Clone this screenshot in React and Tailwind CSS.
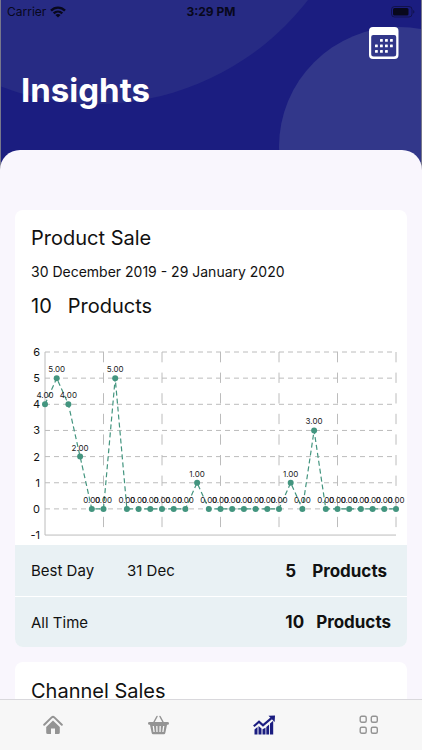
import { useState } from 'react';

const sales = [
  4, 5, 4, 2, 0, 0, 5, 0, 0, 0, 0, 0, 0, 1, 0, 0,
  0, 0, 0, 0, 0, 1, 0, 3, 0, 0, 0, 0, 0, 0, 0,
];

const CHART = { left: 30, right: 381, top: 20, step: 26.15, max: 6, min: -1 };

const xAt = (i) => CHART.left + (i * (CHART.right - CHART.left)) / (sales.length - 1);
const yAt = (value) => CHART.top + (CHART.max - value) * CHART.step;

const StatusBar = () => (
  <div className="grid grid-cols-3 items-center px-1.5 pt-1 h-5 text-xs text-[#08081c]">
    <div className="flex items-center gap-1">
      <span>Carrier</span>
      <svg className="w-4 h-3" viewBox="0 0 16 12" fill="none" stroke="currentColor" strokeWidth="2.4">
        <path d="M1 4.6C5 .6 11 .6 15 4.6" />
        <path d="M3.7 7.4c2.5-2.4 6.1-2.4 8.6 0" />
        <path d="M8 11.6 5.4 9c1.4-1.3 3.8-1.3 5.2 0z" fill="currentColor" stroke="none" />
      </svg>
    </div>
    <span className="text-center font-bold">3:29 PM</span>
    <svg className="w-6 h-3 justify-self-end" viewBox="0 0 24 12">
      <rect x=".5" y=".5" width="20.5" height="10.5" rx="3" fill="none" stroke="currentColor" opacity=".5" />
      <rect x="2" y="2" width="15.5" height="7.5" rx="1.5" fill="currentColor" />
      <path d="M22.3 4v3.6c1.4-.5 1.4-3.1 0-3.600z" fill="currentColor" opacity=".6" />
    </svg>
  </div>
);

const CalendarIcon = () => (
  <svg className="w-[30px] h-8" viewBox="0 0 30 32" fill="#fff">
    <path
      fillRule="evenodd"
      d="M4 0h21.500a4 4 0 0 1 4 4v24a4 4 0 0 1-4 4H4a4 4 0 0 1-4-4V4a4 4 0 0 1 4-4zM4.200 8a2 2 0 0 0-2 2v17a2.500 2.500 0 0 0 2.500 2.500h20a2.500 2.500 0 0 0 2.500-2.500V10a2 2 0 0 0-2-2z"
    />
    {[[11, 12], [16, 12], [21, 12], [6, 17.5], [11, 17.5], [16, 17.5], [21, 17.5], [6, 23], [11, 23], [16, 23]].map(([x, y]) => (
      <rect key={`${x}-${y}`} x={x} y={y} width="2.800" height="2.800" rx=".5" />
    ))}
  </svg>
);

const Header = () => (
  <header className="relative h-[180px] overflow-hidden border-x border-[#77778c] bg-[#1b1d80]">
    <svg className="absolute inset-0 w-full h-full" viewBox="0 0 420 180" preserveAspectRatio="xMaxYMin slice">
      <circle cx="95" cy="-164" r="268" fill="#272b84" />
      <circle cx="398" cy="147" r="120" fill="#32378a" />
    </svg>
    <div className="relative">
      <StatusBar />
      <div className="flex justify-between px-5 pt-[7px]">
        <h1 className="pt-[41px] text-[33px] leading-[44px] font-bold text-white">Insights</h1>
        <button type="button" aria-label="Choose dates" className="mr-0.5 self-start">
          <CalendarIcon />
        </button>
      </div>
    </div>
  </header>
);

const SalesChart = () => {
  const points = sales.map((value, i) => `${xAt(i)},${yAt(value)}`).join(' ');
  const levels = [6, 5, 4, 3, 2, 1, 0, -1];
  const columns = [5, 10, 15, 20, 25, 30];

  return (
    <svg className="block w-full" viewBox="0 0 392 213" role="img" aria-label="Products sold per day">
      <g stroke="#bcbcbc" strokeWidth="1">
        {levels.slice(0, -1).map((level) => (
          <line key={level} x1={CHART.left} x2={CHART.right} y1={yAt(level)} y2={yAt(level)} strokeDasharray="5 4" />
        ))}
        {columns.map((i) => (
          <line key={i} x1={xAt(i)} x2={xAt(i)} y1={yAt(6)} y2={yAt(-1)} strokeDasharray="10.3 10.3" />
        ))}
        <path d={`M${CHART.left} ${yAt(6)}V${yAt(-1)}H${CHART.right}`} fill="none" />
      </g>
      <g fontSize="11" textAnchor="end" fill="#111">
        {levels.map((level) => (
          <text key={level} x="25" y={yAt(level) + 4}>{level}</text>
        ))}
      </g>
      <polyline points={points} fill="none" stroke="#43957f" strokeWidth="1.2" strokeDasharray="5 3" />
      {sales.map((value, i) => (
        <g key={i}>
          <circle cx={xAt(i)} cy={yAt(value)} r="3" fill="#43957f" />
          <text x={xAt(i)} y={yAt(value) - 6} fontSize="8" textAnchor="middle" fill="#222">
            {value.toFixed(2)}
          </text>
        </g>
      ))}
    </svg>
  );
};

const ProductSaleCard = () => (
  <section className="overflow-hidden rounded-lg bg-white">
    <div className="px-4 pt-4">
      <h2 className="text-xl leading-6">Product Sale</h2>
      <p className="mt-3 text-sm">30 December 2019 - 29 January 2020</p>
      <p className="mt-3 flex gap-4 text-xl leading-6">
        <span>10</span>
        <span>Products</span>
      </p>
    </div>
    <div className="mt-3.5">
      <SalesChart />
    </div>
    <div className="flex h-[51px] items-center bg-[#e9f1f4] pl-4 pr-5 pt-0.5 text-[15px]">
      <span className="w-24">Best Day</span>
      <span>31 Dec</span>
      <span className="ml-auto flex gap-4 text-[17px] font-bold">
        <span>5</span>
        <span>Products</span>
      </span>
    </div>
    <div className="mt-px flex h-[50px] items-center bg-[#e9f1f4] px-4 pt-0.5 text-[15px]">
      <span>All Time</span>
      <span className="ml-auto flex gap-3 text-[17px] font-bold">
        <span>10</span>
        <span>Products</span>
      </span>
    </div>
  </section>
);

const HomeIcon = () => (
  <svg className="w-5 h-5" viewBox="0 0 20 20">
    <path d="M1.2 9.8 8.7 2.4q1.300-1.200 2.600 0l7.500 7.400" fill="none" stroke="currentColor" strokeWidth="2" strokeLinecap="round" />
    <path d="M10 5.5 16.8 12v5.500a1.500 1.500 0 0 1-1.500 1.500H12v-5.500H8V19H4.700a1.500 1.500 0 0 1-1.500-1.500V12z" fill="currentColor" />
  </svg>
);

const BasketIcon = () => (
  <svg className="w-[21px] h-5" viewBox="0 0 21 20">
    <path d="M5.2 8.5 9 1.5M15.8 8.5 12 1.5" stroke="currentColor" strokeWidth="1.5" strokeLinecap="round" />
    <rect x="0" y="7" width="21" height="2.8" rx="1.4" fill="currentColor" />
    <path d="M1.8 9h17.400l-1.900 9a1.500 1.500 0 0 1-1.500 1.200H5.200A1.500 1.500 0 0 1 3.700 18z" fill="currentColor" />
    <path d="m5.3 11 .8 6M8.8 11l.2 6M12.2 11l-.2 6M15.7 11l-.8 6" stroke="#f7f7f7" strokeWidth="1.3" />
  </svg>
);

const InsightsIcon = () => (
  <svg className="w-[22px] h-5" viewBox="0 0 22 20" fill="currentColor">
    <path d="M1.500 14.500 4.500 12v7.500h-3zM5.500 11l3 2.500v6h-3zM9.500 14.300l3-1.500v6.700h-3zM13.300 12l2.800-2.600v10.100h-2.800zM17 8.500 20.200 5.700v13.800H17z" />
    <path d="M.8 11.300 6 6.700l4 3.700 8.500-7.200" fill="none" stroke="#f7f7f7" strokeWidth="4.200" />
    <path d="M.8 11.300 6 6.700l4 3.700 8.500-7.200" fill="none" stroke="currentColor" strokeWidth="2.200" />
    <path d="M15.500 .7 22 .5l-.4 6.500z" />
  </svg>
);

const GridIcon = () => (
  <svg className="w-5 h-5" viewBox="0 0 20 20" fill="none" stroke="currentColor" strokeWidth="1.4">
    <rect x="1.2" y="1.2" width="6" height="6" rx="1.5" />
    <rect x="12.3" y="1.2" width="6" height="6" rx="1.5" />
    <rect x="1.2" y="12.3" width="6" height="6" rx="1.5" />
    <rect x="12.3" y="12.3" width="6" height="6" rx="1.5" />
  </svg>
);

const tabs = [
  { name: 'Home', Icon: HomeIcon },
  { name: 'Orders', Icon: BasketIcon },
  { name: 'Insights', Icon: InsightsIcon },
  { name: 'More', Icon: GridIcon },
];

const App = () => {
  const [activeTab, setActiveTab] = useState('Insights');

  return (
    <div className="flex h-screen flex-col bg-[#f9f6fd] font-['Inter',sans-serif] text-[#111]">
      <div className="min-h-0 flex-1 overflow-y-auto [scrollbar-width:none]">
        <Header />
        <main className="relative -mt-[30px] flex flex-col gap-[15px] rounded-t-[20px] bg-[#f9f6fd] px-[15px] pt-[60px]">
          <ProductSaleCard />
          <section className="rounded-t-lg bg-white px-4 pt-[17px] pb-6">
            <h2 className="text-xl leading-6">Channel Sales</h2>
          </section>
        </main>
      </div>
      <nav className="grid h-[51px] grid-cols-4 border-t border-[#d9d8dc] bg-[#f7f7f7]">
        {tabs.map(({ name, Icon }) => (
          <button
            key={name}
            type="button"
            aria-label={name}
            onClick={() => setActiveTab(name)}
            className={`flex items-center justify-center ${activeTab === name ? 'text-[#1b1d80]' : 'text-[#949494]'}`}
          >
            <Icon />
          </button>
        ))}
      </nav>
    </div>
  );
};

export default App;
